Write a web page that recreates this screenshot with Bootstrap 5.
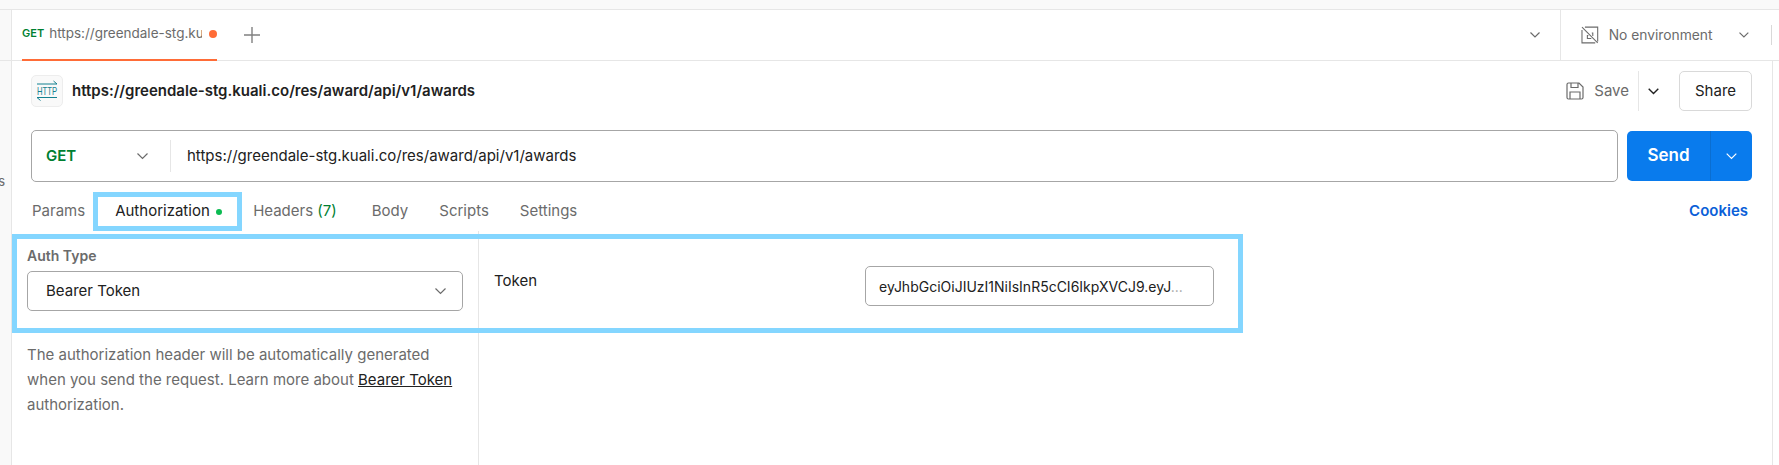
<!DOCTYPE html>
<html lang="en"><head><meta charset="utf-8"><title>Request</title>
<link href="https://cdn.jsdelivr.net/npm/bootstrap@5.3.0/dist/css/bootstrap.min.css" rel="stylesheet">
<style>
html,body{height:465px;overflow:hidden;background:#fff;}
body{font-family:Inter,"Liberation Sans",sans-serif;font-size:15px;color:#212121;}
.top-strip{height:10px;background:#f9f9f9;border-bottom:1px solid #e6e6e6;}
.shell{height:455px;}
.side-rail{width:12px;background:#f9f9f9;border-right:1px solid #e6e6e6;overflow:hidden;position:relative;flex:none;}
.rail-line{height:51px;border-bottom:1px solid #e6e6e6;}
.rail-letter{margin-left:-6px;margin-top:110px;font-size:13px;color:#6b6b6b;line-height:20px;}
.tabbar{height:51px;border-bottom:1px solid #e6e6e6;}
.req-tab{width:195px;height:51px;margin-left:10px;border-bottom:2px solid #ff6c37;margin-bottom:-1px;padding-bottom:2px;flex:none;}
.req-method{font-size:11px;font-weight:600;color:#007f31;margin-right:5px;}
.req-url{width:155px;overflow:hidden;white-space:nowrap;color:#6b6b6b;font-size:13.5px;}
.dot-orange{width:8px;height:8px;border-radius:50%;background:#ff6c37;margin-left:7px;}
.plus-btn{margin-left:27px;}
.tab-chev{margin-right:20px;}
.env-box{width:212px;height:50px;border-left:1px solid #e6e6e6;padding-left:20px;flex:none;margin-right:7px;}
.env-name{color:#6b6b6b;margin-left:10px;width:133px;font-size:13.8px;}
.env-rule{width:1px;height:20px;background:#d9d9d9;margin-left:22px;}
.main-pane{min-width:0;}
.right-strip{width:7px;border-left:1px solid #e6e6e6;flex:none;}
.title-row{height:40px;margin:10px 20px 0 19px;}
.http-box{width:32px;height:32px;border:1px solid #ededed;border-radius:5px;background:#f9f9f9;}
.req-title{font-weight:600;margin-left:9px;}
.save-word{color:#6b6b6b;margin-left:10px;}
.save-rule{width:1px;height:40px;background:#e6e6e6;margin-left:9px;}
.save-chev{margin:0 20px 0 9px;}
.share-btn{width:73px;height:40px;border:1px solid #d9d9d9;border-radius:5px;background:#fff;color:#212121;font-size:15px;padding:0;}
.url-row{margin:19px 20px 0 19px;height:52px;}
.url-field{height:52px;border:1px solid #a6a6a6;border-radius:5px;flex:1 1 auto;}
.method-name{width:105px;padding-left:14px;color:#007f31;font-weight:600;}
.method-rule{width:1px;height:32px;background:#e6e6e6;margin-left:22px;margin-right:16px;}
.send-group{width:125px;height:50px;margin-left:9px;background:#097bed;border-radius:5px;flex:none;color:#fff;}
.send-word{width:84px;font-size:17px;font-weight:600;border-right:1px solid #0a6ed1;height:50px;}
.tabs-row{height:39px;margin:10px 20px 0 20px;color:#6b6b6b;}
.tab-box{border:5px solid #84d6ff;height:39px;padding:0 0 0 17px;width:149px;margin:0 11px 0 8px;color:#212121;flex:none;}
.dot-green{width:6px;height:6px;border-radius:50%;background:#0cbb52;margin-left:6px;}
.tab-count{color:#007f31;}
.gap-body{margin-left:35px;}
.gap-next{margin-left:31px;}
.cookie-link{color:#0b5fd8;font-weight:600;text-decoration:none;}
.auth-area{height:234px;}
.auth-left{width:467px;border-right:1px solid #e6e6e6;padding:15px 15px 0 15px;flex:none;}
.auth-label{font-size:14px;font-weight:600;color:#6b6b6b;line-height:20px;}
.auth-select{height:40px;margin-top:5px;border:1px solid #a6a6a6;border-radius:5px;padding:0 16px 0 18px;}
.auth-note{margin-top:31px;color:#6b6b6b;line-height:25px;width:436px;}
.auth-note a{color:#212121;}
.auth-right{padding:35px 0 0 15px;}
.token-word{width:371px;line-height:30px;flex:none;}
.token-input{width:349px;height:40px;border:1px solid #a6a6a6;border-radius:5px;padding:0 12px 0 13px;white-space:nowrap;font-size:14px;}
.token-more{color:#a6a6a6;}
.mark-box{position:absolute;left:0;top:3px;width:1231px;height:99px;border:5px solid #84d6ff;pointer-events:none;}
</style></head>
<body>
<div class="top-strip"></div>
<div class="shell d-flex">
  <div class="side-rail"><div class="rail-line"></div><div class="rail-letter">ts</div></div>
  <div class="flex-grow-1 d-flex flex-column main-pane">
    <div class="tabbar d-flex align-items-center">
      <div class="req-tab d-flex align-items-center">
        <span class="req-method">GET</span><span class="req-url">https://greendale-stg.kuali.co/res/award</span><span class="dot-orange"></span>
      </div>
      <svg class="plus-btn" width="16" height="16" viewBox="0 0 16 16"><path d="M8 0v16M0 8h16" stroke="#808080" stroke-width="1.4" fill="none"/></svg>
      <div class="flex-grow-1"></div>
      <svg class="tab-chev" width="10" height="6" viewBox="0 0 10 6"><path d="M.5.5 5 5 9.5.5" stroke="#6b6b6b" stroke-width="1.2" fill="none"/></svg>
      <div class="env-box d-flex align-items-center">
        <svg width="18" height="18" viewBox="0 0 18 18" fill="none" stroke="#6b6b6b" stroke-width="1.1"><path d="M4 1h13v14.500M14.500 17H1V4M1 1l16 16M7.500 9.500h-1v3h4M11 7h1v3"/></svg>
        <span class="env-name">No environment</span>
        <svg width="10" height="6" viewBox="0 0 10 6"><path d="M.5.5 5 5 9.500.5" stroke="#6b6b6b" stroke-width="1.2" fill="none"/></svg>
        <span class="env-rule"></span>
      </div>
    </div>
    <div class="d-flex flex-grow-1">
      <div class="flex-grow-1 main-pane">
        <div class="title-row d-flex align-items-center">
          <div class="http-box d-flex align-items-center justify-content-center">
            <svg width="24" height="24" viewBox="0 0 24 24" fill="none" stroke="#13808f" stroke-width="1"><path d="M2 5h20M18.500 2 22 5M2 18.500h20M5.500 21.500 2 18.500"/><text x="12" y="16" text-anchor="middle" font-family="Liberation Sans,sans-serif" font-size="11" fill="#13808f" stroke="none" textLength="20" lengthAdjust="spacingAndGlyphs">HTTP</text></svg>
          </div>
          <span class="req-title">https://greendale-stg.kuali.co/res/award/api/v1/awards</span>
          <div class="flex-grow-1"></div>
          <svg width="18" height="18" viewBox="0 0 18 18" fill="none" stroke="#6b6b6b" stroke-width="1.2"><path d="M1 2.500A1.500 1.500 0 0 1 2.500 1H13l4 4v10.500a1.500 1.500 0 0 1-1.500 1.500h-13A1.500 1.500 0 0 1 1 15.500zM5 1v4.500h7V1M4 17v-7h10v7"/></svg>
          <span class="save-word">Save</span>
          <span class="save-rule"></span>
          <svg class="save-chev" width="11" height="7" viewBox="0 0 11 7"><path d="M.7.7 5.500 5.500 10.300.7" stroke="#212121" stroke-width="1.4" fill="none"/></svg>
          <button class="btn share-btn" type="button">Share</button>
        </div>
        <div class="url-row d-flex align-items-center">
          <div class="url-field d-flex align-items-center">
            <span class="method-name">GET</span>
            <svg width="11" height="7" viewBox="0 0 11 7"><path d="M.5.5 5.500 5.500 10.500.5" stroke="#6b6b6b" stroke-width="1.200" fill="none"/></svg>
            <span class="method-rule"></span>
            <span>https://greendale-stg.kuali.co/res/award/api/v1/awards</span>
          </div>
          <div class="send-group d-flex align-items-center">
            <span class="send-word d-flex align-items-center justify-content-center">Send</span>
            <span class="flex-grow-1 d-flex justify-content-center">
              <svg width="11" height="7" viewBox="0 0 11 7"><path d="M.7.7 5.500 5.500 10.300.7" stroke="#fff" stroke-width="1.200" fill="none"/></svg>
            </span>
          </div>
        </div>
        <div class="tabs-row d-flex align-items-center">
          <span>Params</span>
          <span class="tab-box d-flex align-items-center">Authorization<span class="dot-green"></span></span>
          <span>Headers <span class="tab-count">(7)</span></span>
          <span class="gap-body">Body</span>
          <span class="gap-next">Scripts</span>
          <span class="gap-next">Settings</span>
          <div class="flex-grow-1"></div>
          <a class="cookie-link me-1" href="#">Cookies</a>
        </div>
        <div class="auth-area d-flex position-relative">
          <div class="auth-left">
            <div class="auth-label">Auth Type</div>
            <div class="auth-select d-flex align-items-center justify-content-between">
              <span>Bearer Token</span>
              <svg width="11" height="7" viewBox="0 0 11 7"><path d="M.5.5 5.500 5.500 10.500.5" stroke="#6b6b6b" stroke-width="1.200" fill="none"/></svg>
            </div>
            <p class="auth-note mb-0">The authorization header will be automatically generated when you send the request. Learn more about <a href="#">Bearer Token</a> authorization.</p>
          </div>
          <div class="auth-right d-flex align-items-start">
            <span class="token-word">Token</span>
            <div class="token-input d-flex align-items-center"><span>eyJhbGciOiJIUzI1NiIsInR5cCI6IkpXVCJ9.eyJ<span class="token-more">...</span></span></div>
          </div>
          <div class="mark-box"></div>
        </div>
      </div>
      <div class="right-strip"></div>
    </div>
  </div>
</div>
<script src="https://cdn.jsdelivr.net/npm/bootstrap@5.3.0/dist/js/bootstrap.bundle.min.js"></script>
</body></html>
